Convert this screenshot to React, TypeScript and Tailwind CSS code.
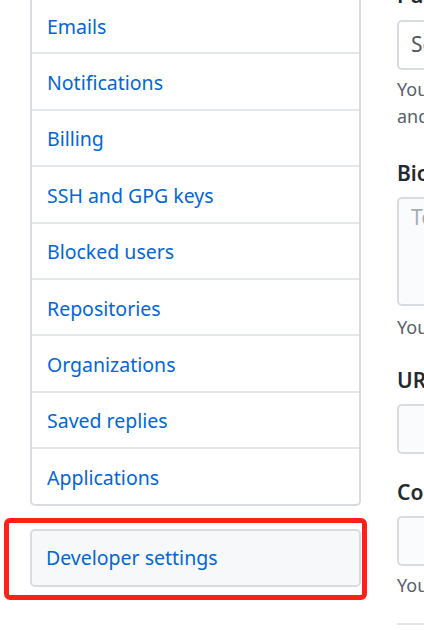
import React from "react";

const menuItems = [
  "Emails",
  "Notifications",
  "Billing",
  "SSH and GPG keys",
  "Blocked users",
  "Repositories",
  "Organizations",
  "Saved replies",
  "Applications",
];

const FormLabel = ({ children, className = "" }: { children: React.ReactNode; className?: string }) => (
  <div className={`h-[31.5px] text-[21px] leading-[31.5px] font-semibold text-[#24292e] whitespace-nowrap ${className}`}>
    {children}
  </div>
);

const Note = ({ children, className = "" }: { children: React.ReactNode; className?: string }) => (
  <p className={`text-[18px] leading-[27px] text-[#586069] whitespace-nowrap ${className}`}>{children}</p>
);

export default function App() {
  return (
    <div className="w-[424px] h-[630px] overflow-hidden bg-white font-['Noto_Sans',sans-serif]">
      <div className="flex">
        {/* settings menu */}
        <div className="ml-[4px] w-[363px] shrink-0">
          <nav className="-mt-[4px] ml-[26px] w-[331px] border-x-2 border-b-2 border-[#d8dce0] rounded-b-[5px]">
            {menuItems.map((item) => (
              <a
                key={item}
                href="#"
                className="flex h-[56.4px] items-center border-t-2 border-[#e4e7ea] px-[15px] pt-[2px] text-[19.5px] text-[#0366d6] first:border-t-0 first:pt-[5px]"
              >
                {item}
              </a>
            ))}
          </nav>

          <div className="mt-[12px] rounded-[6px] border-[5px] border-[#ff2116] pt-[6px] pb-[8px] pl-[21px] pr-[1px]">
            <a
              href="#"
              className="flex h-[58px] items-center rounded-[5px] border-2 border-[#d8dce0] bg-[#f6f8fa] px-[14px] pt-[1px] text-[19.5px] text-[#0366d6]"
            >
              Developer settings
            </a>
          </div>
        </div>

        {/* profile form */}
        <div className="ml-[30px] -mt-[20px] w-[660px] shrink-0">
          <FormLabel className="mb-[8px]">Public email</FormLabel>
          <div className="flex h-[50px] items-center rounded-[5px] border-2 border-[#d8dce0] bg-white px-[12px] text-[21px] text-[#4f575e] whitespace-nowrap">
            Select a verified email to display
          </div>
          <Note className="mt-[6px]">
            You have set your email address to private. To toggle email privacy, go to email settings
            <br />
            and uncheck "Keep my email address private."
          </Note>

          <FormLabel className="mt-[28px] mb-[7.5px]">Bio</FormLabel>
          <div className="h-[109px] rounded-[5px] border-2 border-[#d8dce0] bg-[#fafbfc] px-[12px] pt-[6px] text-[21px] leading-[24px] text-[#a6adb4] whitespace-nowrap">
            Tell us a little bit about yourself
          </div>
          <Note className="mt-[8px]">You can @mention other users and organizations to link to them.</Note>

          <FormLabel className="mt-[24px] mb-[7.5px]">URL</FormLabel>
          <div className="h-[50px] rounded-[5px] border-2 border-[#d8dce0] bg-[#fafbfc]" />

          <FormLabel className="mt-[23px] mb-[8px]">Company</FormLabel>
          <div className="h-[50px] rounded-[5px] border-2 border-[#d8dce0] bg-[#fafbfc]" />
          <Note className="mt-[6px]">You can @mention your company's GitHub organization to link it.</Note>

          <hr className="mt-[24px] border-t-2 border-[#e4e7ea]" />
        </div>
      </div>
    </div>
  );
}
